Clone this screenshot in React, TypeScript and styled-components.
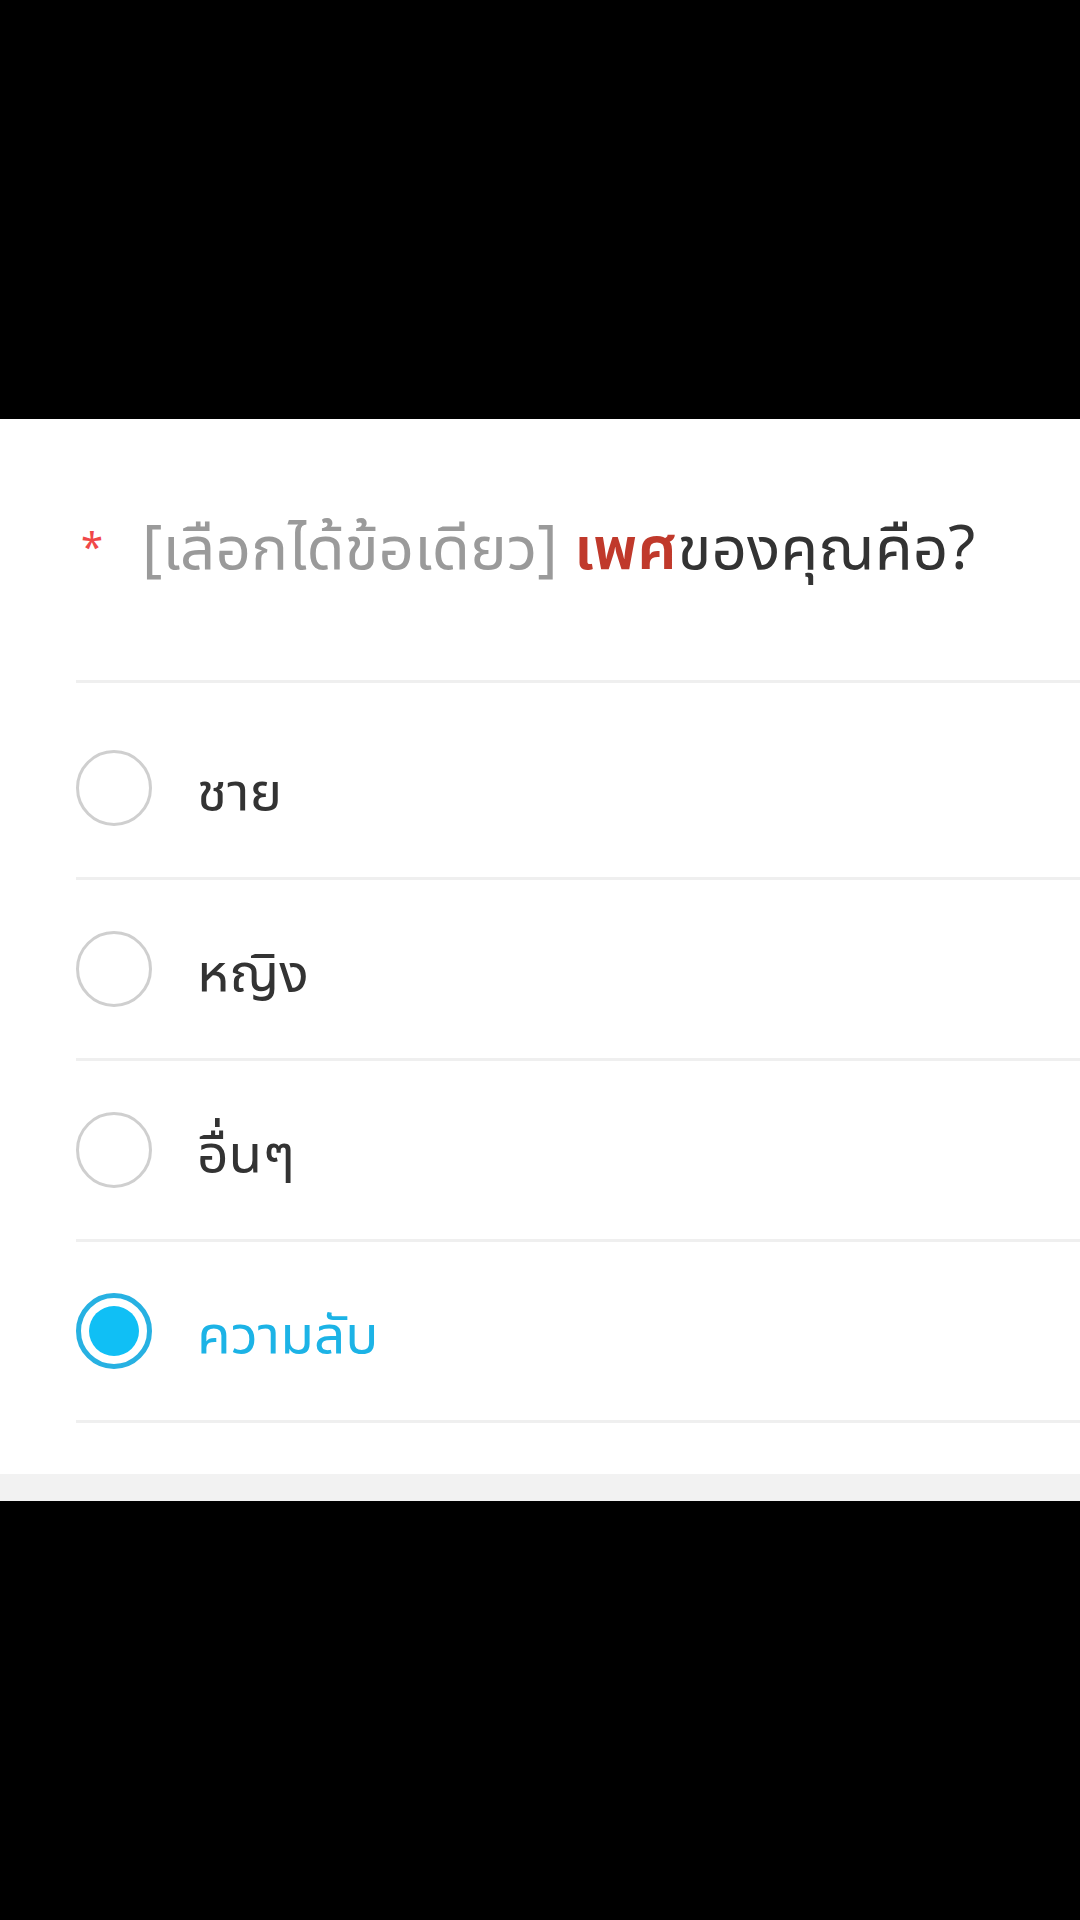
import React from "react";
import styled, { createGlobalStyle } from "styled-components";

const Global = createGlobalStyle`
  html, body { margin: 0; padding: 0; background: #000; }
  body { width: 1080px; height: 1920px; overflow: hidden; font-family: "Noto Sans Thai UI", "Noto Sans Thai", "Noto Sans", "DejaVu Sans", sans-serif; }
`;

const Screen = styled.div`
  width: 1080px;
  height: 1920px;
  background: #000;
  display: flex;
  flex-direction: column;
`;

const Spacer = styled.div<{ $h: number }>`
  height: ${(p) => p.$h}px;
  flex: none;
`;

const Panel = styled.section`
  background: #fff;
  display: flex;
  flex-direction: column;
  padding: 0 0 0 76px;
  height: 1055px;
  box-sizing: border-box;
`;

const Footer = styled.div`
  height: 27px;
  background: #f2f2f2;
`;

const Title = styled.h2`
  margin: 0;
  height: 264px;
  box-sizing: border-box;
  padding: 86px 0 0 5px;
  font-weight: 400;
  font-size: 62px;
  line-height: 80px;
  color: #333;
  white-space: nowrap;
  border-bottom: 3px solid #efefef;
`;

const Star = styled.span`
  display: inline-block;
  color: #f04848;
  font-size: 40px;
  width: 61px;
  vertical-align: 8px;
`;

const Hint = styled.span`
  color: #9a9a9a;
`;

const Key = styled.span`
  color: #c0392b;
  font-weight: 600;
`;

const List = styled.div`
  display: flex;
  flex-direction: column;
  padding-top: 16px;
`;

const Row = styled.label`
  display: flex;
  align-items: center;
  gap: 45px;
  height: 178px;
  border-bottom: 3px solid #efefef;
`;

const Radio = styled.span<{ $on: boolean }>`
  flex: none;
  width: 76px;
  height: 76px;
  border-radius: 50%;
  box-sizing: border-box;
  border: ${(p) => (p.$on ? "5px solid #27b1e2" : "3px solid #cfcfcf")};
  display: flex;
  align-items: center;
  justify-content: center;
  &::after {
    content: "";
    display: ${(p) => (p.$on ? "block" : "none")};
    width: 50px;
    height: 50px;
    border-radius: 50%;
    background: #10bff5;
  }
`;

const Label = styled.span<{ $on: boolean }>`
  font-size: 55px;
  color: ${(p) => (p.$on ? "#1cb3e6" : "#333")};
`;

const options = ["ชาย", "หญิง", "อื่นๆ", "ความลับ"];

export default function App() {
  const selected = 3;
  return (
    <Screen>
      <Global />
      <Spacer $h={419} />
      <Panel>
        <Title>
          <Star>*</Star>
          <Hint>[เลือกได้ข้อเดียว]</Hint> <Key>เพศ</Key>ของคุณคือ?
        </Title>
        <List>
          {options.map((o, i) => (
            <Row key={o}>
              <Radio $on={i === selected} />
              <Label $on={i === selected}>{o}</Label>
            </Row>
          ))}
        </List>
      </Panel>
      <Footer />
    </Screen>
  );
}
